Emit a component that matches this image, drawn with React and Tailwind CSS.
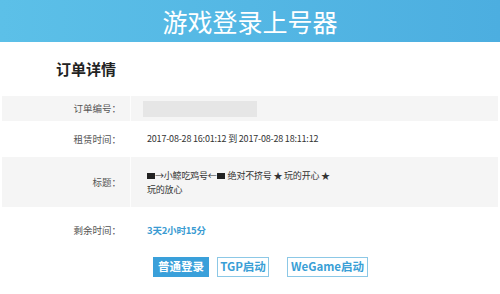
import React from "react";

const F = { fontFamily: '"Noto Sans CJK SC", "Noto Sans", sans-serif' };

function Row({ label, bg, h, children }) {
  return (
    <div className={`flex ${bg} ${h}`}>
      <div className="w-[128px] flex items-center justify-end pr-[9px] text-[9.5px] text-[#555] shrink-0">
        {label}
      </div>
      <div className="w-[1px] bg-white/80 shrink-0" />
      <div className="flex-1 flex items-center pl-[16px] text-[9px] tracking-[-0.2px] text-[#333]">{children}</div>
    </div>
  );
}

function Blk() {
  return <span className="inline-block w-[8px] h-[6px] bg-[#222] align-middle" />;
}

export default function App() {
  return (
    <div className="w-[500px] h-[294px] bg-white overflow-hidden" style={F}>
      <div className="h-[42px] bg-gradient-to-r from-[#5cc0e8] to-[#4caee0] flex items-center justify-center text-white text-[25px] leading-none">
        游戏登录上号器
      </div>
      <div className="h-[54px] flex items-center pl-[56px] text-[15px] font-bold text-[#222]">订单详情</div>
      <div className="px-[2px]">
        <Row label="订单编号：" bg="bg-[#f5f5f5]" h="h-[25px]">
          <div className="ml-[-4px] w-[114px] h-[16px] bg-[#e6e6e6]" />
        </Row>
        <Row label="租赁时间：" bg="bg-white" h="h-[36px]">
          <span>2017-08-28 16:01:12 到 2017-08-28 18:11:12</span>
        </Row>
        <Row label="标题：" bg="bg-[#f5f5f5]" h="h-[50px]">
          <div className="leading-[14px] pt-[1px]">
            <div className="flex items-center">
              <Blk />
              <span>→小鲸吃鸡号←</span>
              <Blk />
              <span className="ml-[3px]">绝对不挤号 ★ 玩的开心 ★</span>
            </div>
            <div>玩的放心</div>
          </div>
        </Row>
        <Row label="剩余时间：" bg="bg-white" h="h-[46px]">
          <span className="text-[#3a9bd2] font-bold text-[9.5px]">3天2小时15分</span>
        </Row>
      </div>
      <div className="flex items-center pl-[153px] mt-[4px] gap-[8px] text-[11.5px] font-bold">
        <div className="w-[56px] h-[20px] flex items-center justify-center bg-[#3aa0da] text-white">普通登录</div>
        <div className="w-[52px] h-[20px] flex items-center justify-center border border-[#8cc8e6] text-[#3a9fd6]">TGP启动</div>
        <div className="ml-[10px] w-[81px] h-[20px] flex items-center justify-center border border-[#8cc8e6] text-[#3a9fd6]">WeGame启动</div>
      </div>
    </div>
  );
}
